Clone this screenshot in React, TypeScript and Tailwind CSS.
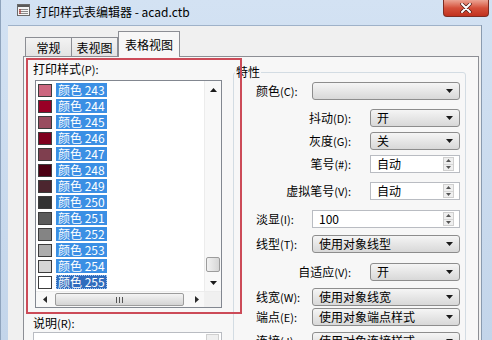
import type { ReactNode } from "react";

const swatches: [string, string][] = [
  ["243", "#cc667f"],
  ["244", "#990026"],
  ["245", "#994c5f"],
  ["246", "#7f001f"],
  ["247", "#7f3f4f"],
  ["248", "#4c0013"],
  ["249", "#4c262f"],
  ["250", "#333333"],
  ["251", "#5b5b5b"],
  ["252", "#848484"],
  ["253", "#adadad"],
  ["254", "#d6d6d6"],
  ["255", "#ffffff"],
];

function Tri({ up = false }: { up?: boolean }) {
  return (
    <svg width="7" height="4" viewBox="0 0 7 4" className="shrink-0">
      <path d={up ? "M0 4 L3.5 0 L7 4 Z" : "M0 0 L7 0 L3.5 4 Z"} fill="#1a1a1a" />
    </svg>
  );
}

function SideTri({ right = false }: { right?: boolean }) {
  return (
    <svg width="4" height="7" viewBox="0 0 4 7">
      <path d={right ? "M0 0 L4 3.5 L0 7 Z" : "M4 0 L0 3.5 L4 7 Z"} fill="#2a2a2a" />
    </svg>
  );
}

function Lbl({ zh, k }: { zh: string; k: string }) {
  return (
    <span className="whitespace-nowrap text-[12px] leading-[14px] text-black">
      {zh}
      <span className="text-[11px]">({k}):</span>
    </span>
  );
}

function Combo({ w, value }: { w: string; value?: string }) {
  return (
    <div className={`${w} flex h-[18px] items-center rounded-[3px] border border-[#8d8d8d] bg-linear-to-b from-[#f5f5f5] to-[#d8d8d8] pl-[6px] pr-[6px] text-[12px] leading-[14px]`}>
      <span className="flex-1 text-black">{value}</span>
      <Tri />
    </div>
  );
}

function Spin({ w, value }: { w: string; value: string }) {
  return (
    <div className={`${w} flex h-[18px] items-center border border-[#b9bcc2] bg-white pl-[6px] pr-[5px] text-[12px] leading-[14px]`}>
      <span className="flex-1 text-black">{value}</span>
      <div className="flex h-[14px] w-[11px] flex-col border border-[#cfcfcf] bg-[#efefef]">
        <div className="flex flex-1 items-center justify-center">
          <svg width="5" height="3" viewBox="0 0 5 3"><path d="M0 3 L2.5 0 L5 3 Z" fill="#555" /></svg>
        </div>
        <div className="flex flex-1 items-center justify-center border-t border-[#d6d6d6]">
          <svg width="5" height="3" viewBox="0 0 5 3"><path d="M0 0 L5 0 L2.5 3 Z" fill="#555" /></svg>
        </div>
      </div>
    </div>
  );
}

function FullRow({ zh, k, mt, children }: { zh: string; k: string; mt: string; children: ReactNode }) {
  return (
    <div className={`flex h-[18px] items-center text-[12px] leading-[14px] ${mt}`}>
      <div className="w-[78px] pl-[22px]"><Lbl zh={zh} k={k} /></div>
      {children}
    </div>
  );
}

function IndentRow({ zh, k, mt, children }: { zh: string; k: string; mt: string; children: ReactNode }) {
  return (
    <div className={`flex h-[18px] items-center text-[12px] leading-[14px] ${mt}`}>
      <div className="w-[136px] pr-[19px] text-right"><Lbl zh={zh} k={k} /></div>
      {children}
    </div>
  );
}

function TitleIcon() {
  return (
    <svg width="13" height="12" viewBox="0 0 13 12">
      <rect x="0.5" y="0.5" width="12" height="11" fill="#f4f4f4" stroke="#6a6a6a" />
      <rect x="1" y="1" width="11" height="2" fill="#5a5a5a" />
      <path d="M2 5.5 H11 M2 7.5 H11 M2 9.5 H11" stroke="#8a8a8a" />
      <rect x="2" y="5" width="2" height="5" fill="#b03030" opacity="0.6" />
    </svg>
  );
}

export default function App() {
  return (
    <div className="flex h-[340px] w-[492px] flex-col overflow-hidden border-l border-[#8fa4bd] bg-linear-to-b from-[#d3e2f3] to-[#c3d5ea] font-['Noto_Sans_CJK_SC',sans-serif]">
      {/* title bar */}
      <div className="flex h-[25px] shrink-0 items-start text-[12px] leading-[14px]">
        <div className="ml-[16px] mt-[4px]"><TitleIcon /></div>
        <span className="ml-[6px] mt-[5px] text-black">打印样式表编辑器 - acad.ctb</span>
        <div className="flex-1" />
        <div className="mr-[3px] flex h-[17px] w-[46px] items-center justify-center rounded-b-[4px] border border-t-0 border-[#7d2c22] bg-linear-to-b from-[#eba393] via-[#d44f3a] to-[#c1311e]">
          <svg width="12" height="10" viewBox="0 0 12 10">
            <path d="M2 1 L10 9 M10 1 L2 9" stroke="#4a1a14" strokeWidth="3.4" strokeLinecap="round" />
            <path d="M2 1 L10 9 M10 1 L2 9" stroke="#ffffff" strokeWidth="2" strokeLinecap="round" />
          </svg>
        </div>
      </div>

      <div className="flex flex-1">
        <div className="w-[7px] shrink-0" />
        {/* client */}
        <div className="flex w-[473px] shrink-0 flex-col border-t border-[#9fb2c9] bg-[#f0f0f0]">
          {/* tabs */}
          <div className="flex h-[30px] shrink-0 items-end pl-[17px] text-[12px] leading-[14px] text-black">
            <div className="flex h-[19px] w-[47px] items-center justify-center border border-b-0 border-[#8c8e94] bg-linear-to-b from-[#f3f3f3] to-[#e3e3e3] pt-[1px]">常规</div>
            <div className="flex h-[19px] w-[46px] items-center justify-center border border-b-0 border-l-0 border-[#8c8e94] bg-linear-to-b from-[#f3f3f3] to-[#e3e3e3] pt-[1px]">表视图</div>
            <div className="relative z-10 -mb-px flex h-[26px] w-[62px] items-start justify-center border border-b-0 border-[#8c8e94] bg-[#f7f7f7] pt-[6px]">表格视图</div>
          </div>

          {/* tab panel */}
          <div className="relative ml-[15px] flex w-[456px] flex-1 border border-b-0 border-[#8c8e94] bg-[#f7f7f7]">
            {/* left column */}
            <div className="flex w-[209px] shrink-0 flex-col pl-[9px] text-[12px] leading-[14px]">
              <div className="mt-[5px] h-[14px]"><Lbl zh="打印样式" k="P" /></div>
              <div className="ml-[2px] mt-[4px] flex h-[228px] w-[187px] flex-col border border-[#828790] bg-white">
                <div className="flex h-[210px]">
                  <div className="flex flex-1 flex-col pt-[1px]">
                    {swatches.map(([n, c], i) => (
                      <div key={n} className="flex h-[16px] items-center">
                        <div className="ml-[2px] h-[13px] w-[14px] border border-[#3c3c3c]" style={{ background: c }} />
                        <div
                          className={
                            i === swatches.length - 1
                              ? "ml-[4px] h-[14px] w-[51px] border border-dotted border-[#9cc3f0] bg-[#2f6cbd] pl-[1px] text-[12px] leading-[12px] text-white"
                              : "ml-[4px] h-[14px] w-[51px] bg-[#3b8fe4] pl-[2px] text-[12px] leading-[14px] text-white"
                          }
                        >
                          颜色 {n}
                        </div>
                      </div>
                    ))}
                  </div>
                  {/* vertical scrollbar */}
                  <div className="flex w-[17px] flex-col border-l border-[#ececec] bg-[#f8f8f8]">
                    <div className="flex h-[17px] items-center justify-center"><Tri up /></div>
                    <div className="flex flex-1 flex-col justify-end pb-[2px]">
                      <div className="mx-[1px] h-[15px] rounded-[2px] border border-[#9c9c9c] bg-linear-to-r from-[#f2f2f2] to-[#d6d6d6]" />
                    </div>
                    <div className="flex h-[17px] items-center justify-center"><Tri /></div>
                  </div>
                </div>
                {/* horizontal scrollbar */}
                <div className="flex h-[16px] border-t border-[#ececec] bg-[#f8f8f8]">
                  <div className="flex w-[17px] items-center justify-center"><SideTri /></div>
                  <div className="ml-[2px] my-[1px] flex w-[129px] items-center justify-center rounded-[2px] border border-[#9c9c9c] bg-linear-to-b from-[#f4f4f4] to-[#d4d4d4]">
                    <svg width="7" height="6" viewBox="0 0 7 6"><path d="M0.5 0 V6 M3.5 0 V6 M6.5 0 V6" stroke="#555" /></svg>
                  </div>
                  <div className="flex flex-1 items-center justify-center pl-[6px]"><SideTri right /></div>
                  <div className="w-[17px] bg-[#f0f0f0]" />
                </div>
              </div>
              <div className="mt-[8px] h-[14px]"><Lbl zh="说明" k="R" /></div>
              <div className="mt-[2px] flex h-[20px] w-[189px] justify-end border border-[#b9bcc2] bg-white pr-[2px] pt-[1px]">
                <div className="h-[14px] w-[13px] border border-[#cfcfcf] bg-[#efefef]" />
              </div>
            </div>

            {/* right column: properties group */}
            <fieldset className="mt-[8px] flex w-[233px] shrink-0 flex-col self-start rounded-[3px] border border-[#d3dce3] pb-[20px]">
              <legend className="ml-[1px] px-[1px] text-[12px] leading-[14px] text-black">特性</legend>
              <FullRow zh="颜色" k="C" mt="mt-[3px]"><Combo w="w-[148px]" /></FullRow>
              <IndentRow zh="抖动" k="D" mt="mt-[9px]"><Combo w="w-[90px]" value="开" /></IndentRow>
              <IndentRow zh="灰度" k="G" mt="mt-[5px]"><Combo w="w-[90px]" value="关" /></IndentRow>
              <IndentRow zh="笔号" k="#" mt="mt-[5px]"><Spin w="w-[90px]" value="自动" /></IndentRow>
              <IndentRow zh="虚拟笔号" k="V" mt="mt-[9px]"><Spin w="w-[90px]" value="自动" /></IndentRow>
              <FullRow zh="淡显" k="I" mt="mt-[10px]"><Spin w="w-[148px]" value="100" /></FullRow>
              <FullRow zh="线型" k="T" mt="mt-[7px]"><Combo w="w-[148px]" value="使用对象线型" /></FullRow>
              <IndentRow zh="自适应" k="V" mt="mt-[10px]"><Combo w="w-[90px]" value="开" /></IndentRow>
              <FullRow zh="线宽" k="W" mt="mt-[7px]"><Combo w="w-[148px]" value="使用对象线宽" /></FullRow>
              <FullRow zh="端点" k="E" mt="mt-[2px]"><Combo w="w-[148px]" value="使用对象端点样式" /></FullRow>
              <FullRow zh="连接" k="J" mt="mt-[6px]"><Combo w="w-[148px]" value="使用对象连接样式" /></FullRow>
            </fieldset>

            {/* red annotation frame drawn over the dialog */}
            <div className="pointer-events-none absolute left-[2px] top-[1px] h-[256px] w-[216px] border-2 border-[#cc4b58]" />
          </div>
        </div>
        <div className="flex-1 border-l border-[#8a9bb0]" />
      </div>
    </div>
  );
}
